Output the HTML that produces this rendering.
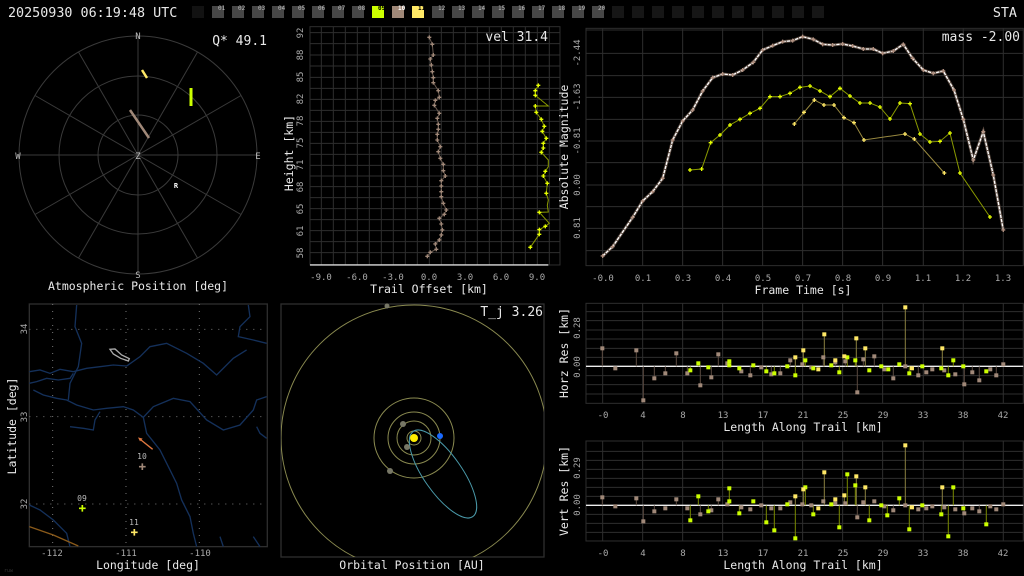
<!DOCTYPE html>
<html><head><meta charset="utf-8">
<style>
html,body{margin:0;padding:0;background:#000;}
svg{display:block;}
text{font-family:"DejaVu Sans Mono","Liberation Mono",monospace;}
</style></head>
<body>
<svg width="1024" height="576" viewBox="0 0 1024 576" xmlns="http://www.w3.org/2000/svg">
<defs>
<path id="p" d="M-6 0H6M0-6V6" />
<rect id="s" x="-6" y="-6" width="12" height="12"/>
</defs>
<rect width="1024" height="576" fill="#000"/>

<!-- header -->
<text x="8" y="17" fill="#e8e8e8" font-size="13.4">20250930 06:19:48 UTC</text>
<text x="1017" y="17" fill="#e8e8e8" font-size="13.4" text-anchor="end">STA</text>
<g>
<rect x="192" y="6" width="12" height="12" fill="#121212"/>
<rect x="212" y="6" width="12" height="12" fill="#474747"/>
<rect x="232" y="6" width="12" height="12" fill="#474747"/>
<rect x="252" y="6" width="12" height="12" fill="#474747"/>
<rect x="272" y="6" width="12" height="12" fill="#474747"/>
<rect x="292" y="6" width="12" height="12" fill="#474747"/>
<rect x="312" y="6" width="12" height="12" fill="#474747"/>
<rect x="332" y="6" width="12" height="12" fill="#474747"/>
<rect x="352" y="6" width="12" height="12" fill="#474747"/>
<rect x="372" y="6" width="12" height="12" fill="#ccff00"/>
<rect x="392" y="6" width="12" height="12" fill="#a08878"/>
<rect x="412" y="6" width="12" height="12" fill="#ffe866"/>
<rect x="432" y="6" width="12" height="12" fill="#474747"/>
<rect x="452" y="6" width="12" height="12" fill="#474747"/>
<rect x="472" y="6" width="12" height="12" fill="#474747"/>
<rect x="492" y="6" width="12" height="12" fill="#474747"/>
<rect x="512" y="6" width="12" height="12" fill="#474747"/>
<rect x="532" y="6" width="12" height="12" fill="#474747"/>
<rect x="552" y="6" width="12" height="12" fill="#474747"/>
<rect x="572" y="6" width="12" height="12" fill="#474747"/>
<rect x="592" y="6" width="12" height="12" fill="#474747"/>
<g fill="#161616">
<rect x="612" y="6" width="12" height="12"/><rect x="632" y="6" width="12" height="12"/><rect x="652" y="6" width="12" height="12"/><rect x="672" y="6" width="12" height="12"/><rect x="692" y="6" width="12" height="12"/><rect x="712" y="6" width="12" height="12"/><rect x="732" y="6" width="12" height="12"/><rect x="752" y="6" width="12" height="12"/><rect x="772" y="6" width="12" height="12"/><rect x="792" y="6" width="12" height="12"/><rect x="812" y="6" width="12" height="12"/>
</g>
<g font-size="6" fill="#bbb">
<text x="218" y="10">01</text><text x="238" y="10">02</text><text x="258" y="10">03</text><text x="278" y="10">04</text><text x="298" y="10">05</text><text x="318" y="10">06</text><text x="338" y="10">07</text><text x="358" y="10">08</text><text x="378" y="10" fill="#000" font-weight="bold">09</text><text x="398" y="10" fill="#fff" font-weight="bold">10</text><text x="418" y="10" fill="#000" font-weight="bold">11</text><text x="438" y="10">12</text><text x="458" y="10">13</text><text x="478" y="10">14</text><text x="498" y="10">15</text><text x="518" y="10">16</text><text x="538" y="10">17</text><text x="558" y="10">18</text><text x="578" y="10">19</text><text x="598" y="10">20</text>
</g>
</g>

<!-- polar plot -->
<g stroke="#3a3a3a" fill="none" stroke-width="1">
<circle cx="138" cy="155" r="119"/><circle cx="138" cy="155" r="79"/><circle cx="138" cy="155" r="40"/>
<line x1="138" y1="36" x2="138" y2="274"/><line x1="19" y1="155" x2="257" y2="155"/>
<line x1="78.5" y1="52" x2="197.5" y2="258"/><line x1="197.5" y1="52" x2="78.5" y2="258"/>
<line x1="35" y1="95.5" x2="241" y2="214.5"/><line x1="241" y1="95.5" x2="35" y2="214.5"/>
</g>
<g font-size="9" fill="#bbb" text-anchor="middle">
<text x="138" y="39">N</text><text x="138" y="278">S</text><text x="18" y="159">W</text><text x="258" y="159">E</text><text x="138" y="159">Z</text>
</g>
<text x="176" y="188" fill="#fff" font-size="7" font-weight="bold" text-anchor="middle">R</text>
<line x1="130" y1="110" x2="149" y2="138" stroke="#a08878" stroke-width="2.5"/>
<line x1="142" y1="70" x2="147" y2="78" stroke="#ffe866" stroke-width="2.5"/>
<line x1="191" y1="88" x2="191" y2="106" stroke="#ccff00" stroke-width="3"/>
<text x="267" y="45" fill="#e8e8e8" font-size="13" text-anchor="end">Q* 49.1</text>
<text x="138" y="290" fill="#e8e8e8" font-size="11.5" text-anchor="middle">Atmospheric Position [deg]</text>

<!-- trail offset -->
<g transform="translate(280,20) scale(0.3333)">
<g stroke="#2e2e2e" stroke-width="3" fill="none">
<path d="M124 20V735M160 20V735M196 20V735M232 20V735M268 20V735M304 20V735M340 20V735M376 20V735M412 20V735M448 20V735M484 20V735M520 20V735M556 20V735M592 20V735M628 20V735M664 20V735M700 20V735M736 20V735M772 20V735M808 20V735"/>
<path d="M90 38H840M90 71H840M90 105H840M90 138H840M90 172H840M90 205H840M90 238H840M90 271H840M90 304H840M90 337H840M90 370H840M90 403H840M90 436H840M90 468H840M90 500H840M90 533H840M90 566H840M90 599H840M90 632H840M90 665H840M90 698H840"/>
<rect x="90" y="20" width="750" height="715"/>
</g>
<line x1="90" y1="735" x2="805" y2="735" stroke="#ddd" stroke-width="4"/>
<polyline fill="none" stroke="#6a5a50" stroke-width="3" points="448,52 457,73 460,105 451,117 454,135 457,155 460,173 460,188 475,212 478,232 466,241 463,256 478,280 472,295 475,313 475,328 472,343 472,360 481,380 475,395 481,415 490,433 490,452 496,468 484,482 484,498 484,515 484,530 490,550 499,570 493,583 478,595 484,612 487,630 484,645 478,660 466,672 469,688 451,697 442,709"/>
<g stroke="#a08878" stroke-width="4">
<use href="#p" x="448" y="52"/><use href="#p" x="457" y="73"/><use href="#p" x="460" y="105"/><use href="#p" x="451" y="117"/><use href="#p" x="454" y="135"/><use href="#p" x="457" y="155"/><use href="#p" x="460" y="173"/><use href="#p" x="460" y="188"/><use href="#p" x="475" y="212"/><use href="#p" x="478" y="232"/><use href="#p" x="466" y="241"/><use href="#p" x="463" y="256"/><use href="#p" x="478" y="280"/><use href="#p" x="472" y="295"/><use href="#p" x="475" y="313"/><use href="#p" x="475" y="328"/><use href="#p" x="472" y="343"/><use href="#p" x="472" y="360"/><use href="#p" x="481" y="380"/><use href="#p" x="475" y="395"/><use href="#p" x="481" y="415"/><use href="#p" x="490" y="433"/><use href="#p" x="490" y="452"/><use href="#p" x="496" y="468"/><use href="#p" x="484" y="482"/><use href="#p" x="484" y="498"/><use href="#p" x="484" y="515"/><use href="#p" x="484" y="530"/><use href="#p" x="490" y="550"/><use href="#p" x="499" y="570"/><use href="#p" x="493" y="583"/><use href="#p" x="478" y="595"/><use href="#p" x="484" y="612"/><use href="#p" x="487" y="630"/><use href="#p" x="484" y="645"/><use href="#p" x="478" y="660"/><use href="#p" x="466" y="672"/><use href="#p" x="469" y="688"/><use href="#p" x="451" y="697"/><use href="#p" x="442" y="709"/>
</g>
<polyline fill="none" stroke="#8a9a00" stroke-width="3" points="775,196 766,212 766,226 805,258 766,258 769,277 784,298 793,319 787,334 799,355 790,370 790,384 784,397 805,420 805,440 796,454 790,468 802,490 799,520 805,540 802,556 805,576 778,577 808,610 796,619 778,629 778,643 751,682"/>
<g stroke="#e6ff00" stroke-width="4">
<use href="#p" x="775" y="196"/><use href="#p" x="766" y="212"/><use href="#p" x="766" y="226"/><use href="#p" x="766" y="258"/><use href="#p" x="769" y="277"/><use href="#p" x="784" y="298"/><use href="#p" x="793" y="319"/><use href="#p" x="787" y="334"/><use href="#p" x="799" y="355"/><use href="#p" x="790" y="370"/><use href="#p" x="790" y="384"/><use href="#p" x="784" y="397"/><use href="#p" x="796" y="454"/><use href="#p" x="790" y="468"/><use href="#p" x="802" y="490"/><use href="#p" x="799" y="520"/><use href="#p" x="778" y="577"/><use href="#p" x="796" y="619"/><use href="#p" x="778" y="629"/><use href="#p" x="778" y="643"/><use href="#p" x="751" y="682"/>
</g>
</g>
<g font-size="9" fill="#aaa">
<g text-anchor="middle">
<text transform="rotate(-90 303 33)" x="303" y="33">92</text>
<text transform="rotate(-90 303 55)" x="303" y="55">88</text>
<text transform="rotate(-90 303 77)" x="303" y="77">85</text>
<text transform="rotate(-90 303 99)" x="303" y="99">82</text>
<text transform="rotate(-90 303 121)" x="303" y="121">78</text>
<text transform="rotate(-90 303 143)" x="303" y="143">75</text>
<text transform="rotate(-90 303 165)" x="303" y="165">71</text>
<text transform="rotate(-90 303 187)" x="303" y="187">68</text>
<text transform="rotate(-90 303 209)" x="303" y="209">65</text>
<text transform="rotate(-90 303 231)" x="303" y="231">61</text>
<text transform="rotate(-90 303 253)" x="303" y="253">58</text>
<text x="321" y="280">-9.0</text><text x="357" y="280">-6.0</text><text x="393" y="280">-3.0</text><text x="429" y="280">0.0</text><text x="465" y="280">3.0</text><text x="501" y="280">6.0</text><text x="537" y="280">9.0</text>
</g>
</g>
<text transform="rotate(-90 293 153)" x="293" y="153" fill="#e8e8e8" font-size="11.5" text-anchor="middle">Height [km]</text>
<text x="429" y="293" fill="#e8e8e8" font-size="11.5" text-anchor="middle">Trail Offset [km]</text>
<text x="548" y="41" fill="#e8e8e8" font-size="13" text-anchor="end">vel 31.4</text>

<!-- light curve -->
<g transform="translate(550,25) scale(0.3333)">
<g stroke="#2e2e2e" stroke-width="3" fill="none">
<path d="M158 10V722M278 10V722M398 10V722M518 10V722M638 10V722M758 10V722M878 10V722M998 10V722M1120 10V722M1240 10V722M1360 10V722"/>
<path d="M108 15H1420M108 85H1420M108 152H1420M108 217H1420M108 283H1420M108 348H1420M108 413H1420M108 480H1420M108 545H1420M108 610H1420M108 677H1420"/>
<rect x="108" y="10" width="1312" height="712"/>
</g>
<polyline fill="none" stroke="#5a4a40" stroke-width="9" points="158,693 188,665 248,577 278,528 308,500 338,460 368,345 398,288 428,255 458,198 488,158 518,147 548,150 578,135 610,112 638,75 668,62 698,50 728,47 758,35 790,43 818,58 848,60 878,57 908,63 940,72 970,72 998,85 1030,78 1060,58 1088,100 1120,135 1150,145 1180,138 1212,195 1240,283 1270,405 1300,320 1330,450 1360,615"/>
<polyline fill="none" stroke="#fff" stroke-width="4" stroke-dasharray="10 3" points="158,693 188,665 248,577 278,528 308,500 338,460 368,345 398,288 428,255 458,198 488,158 518,147 548,150 578,135 610,112 638,75 668,62 698,50 728,47 758,35 790,43 818,58 848,60 878,57 908,63 940,72 970,72 998,85 1030,78 1060,58 1088,100 1120,135 1150,145 1180,138 1212,195 1240,283 1270,405 1300,320 1330,450 1360,615"/>
<g stroke="#b09080" stroke-width="4">
<use href="#p" x="158" y="693"/><use href="#p" x="188" y="665"/><use href="#p" x="248" y="577"/><use href="#p" x="278" y="528"/><use href="#p" x="308" y="500"/><use href="#p" x="338" y="460"/><use href="#p" x="368" y="345"/><use href="#p" x="398" y="288"/><use href="#p" x="428" y="255"/><use href="#p" x="458" y="198"/><use href="#p" x="488" y="158"/><use href="#p" x="518" y="147"/><use href="#p" x="548" y="150"/><use href="#p" x="578" y="135"/><use href="#p" x="610" y="112"/><use href="#p" x="638" y="75"/><use href="#p" x="668" y="62"/><use href="#p" x="698" y="50"/><use href="#p" x="728" y="47"/><use href="#p" x="758" y="35"/><use href="#p" x="790" y="43"/><use href="#p" x="818" y="58"/><use href="#p" x="848" y="60"/><use href="#p" x="878" y="57"/><use href="#p" x="908" y="63"/><use href="#p" x="940" y="72"/><use href="#p" x="970" y="72"/><use href="#p" x="998" y="85"/><use href="#p" x="1030" y="78"/><use href="#p" x="1060" y="58"/><use href="#p" x="1088" y="100"/><use href="#p" x="1120" y="135"/><use href="#p" x="1150" y="145"/><use href="#p" x="1180" y="138"/><use href="#p" x="1212" y="195"/><use href="#p" x="1240" y="283"/><use href="#p" x="1270" y="405"/><use href="#p" x="1300" y="320"/><use href="#p" x="1330" y="450"/><use href="#p" x="1360" y="615"/>
</g>
<polyline fill="none" stroke="#8a9a00" stroke-width="3" points="420,435 455,432 482,353 510,330 540,300 570,283 600,265 630,250 660,215 690,215 720,205 750,187 780,183 810,198 840,215 870,190 900,213 930,234 960,234 990,246 1020,282 1050,234 1080,236 1110,327 1140,351 1170,349 1200,324 1230,444 1320,576"/>
<g stroke="#e6ff00" stroke-width="4">
<use href="#p" x="420" y="435"/><use href="#p" x="455" y="432"/><use href="#p" x="482" y="353"/><use href="#p" x="510" y="330"/><use href="#p" x="540" y="300"/><use href="#p" x="570" y="283"/><use href="#p" x="600" y="265"/><use href="#p" x="630" y="250"/><use href="#p" x="660" y="215"/><use href="#p" x="690" y="215"/><use href="#p" x="720" y="205"/><use href="#p" x="750" y="187"/><use href="#p" x="780" y="183"/><use href="#p" x="810" y="198"/><use href="#p" x="840" y="215"/><use href="#p" x="870" y="190"/><use href="#p" x="900" y="213"/><use href="#p" x="930" y="234"/><use href="#p" x="960" y="234"/><use href="#p" x="990" y="246"/><use href="#p" x="1020" y="282"/><use href="#p" x="1050" y="234"/><use href="#p" x="1080" y="236"/><use href="#p" x="1110" y="327"/><use href="#p" x="1140" y="351"/><use href="#p" x="1170" y="349"/><use href="#p" x="1200" y="324"/><use href="#p" x="1230" y="444"/><use href="#p" x="1320" y="576"/>
</g>
<polyline fill="none" stroke="#9a8a40" stroke-width="3" points="733,297 762,262 793,225 822,240 852,240 882,278 912,293 942,345 1065,327 1093,342 1183,444"/>
<g stroke="#ffe866" stroke-width="4">
<use href="#p" x="733" y="297"/><use href="#p" x="762" y="262"/><use href="#p" x="793" y="225"/><use href="#p" x="822" y="240"/><use href="#p" x="852" y="240"/><use href="#p" x="882" y="278"/><use href="#p" x="912" y="293"/><use href="#p" x="942" y="345"/><use href="#p" x="1065" y="327"/><use href="#p" x="1093" y="342"/><use href="#p" x="1183" y="444"/>
</g>
</g>
<g font-size="9" fill="#aaa" text-anchor="middle">
<text transform="rotate(-90 580 53)" x="580" y="53">-2.44</text>
<text transform="rotate(-90 580 97)" x="580" y="97">-1.63</text>
<text transform="rotate(-90 580 141)" x="580" y="141">-0.81</text>
<text transform="rotate(-90 580 185)" x="580" y="185">0.00</text>
<text transform="rotate(-90 580 228)" x="580" y="228">0.81</text>
<text x="603" y="281">-0.0</text><text x="643" y="281">0.1</text><text x="683" y="281">0.3</text><text x="723" y="281">0.4</text><text x="763" y="281">0.5</text><text x="803" y="281">0.7</text><text x="843" y="281">0.8</text><text x="883" y="281">0.9</text><text x="923" y="281">1.1</text><text x="963" y="281">1.2</text><text x="1003" y="281">1.3</text>
</g>
<text transform="rotate(-90 568 147)" x="568" y="147" fill="#e8e8e8" font-size="11.5" text-anchor="middle">Absolute Magnitude</text>
<text x="803" y="294" fill="#e8e8e8" font-size="11.5" text-anchor="middle">Frame Time [s]</text>
<text x="1020" y="41" fill="#e8e8e8" font-size="13" text-anchor="end">mass -2.00</text>

<!-- map -->
<g transform="translate(0,300) scale(0.3333)">
<rect x="88" y="12" width="714" height="728" fill="none" stroke="#2e2e2e" stroke-width="4"/>
<g stroke="#777" stroke-width="3" stroke-dasharray="3 18" fill="none">
<path d="M158 12V740M378 12V740M598 12V740M88 88H802M88 350H802M88 612H802"/>
</g>
<g stroke="#14305a" stroke-width="4" fill="none">
<path d="M230 15 L225 80 L245 130 L235 200 L210 250 L205 300"/>
<path d="M88 215 L120 210 L150 220 L180 208 L220 215 L260 205 L300 200 L340 195 L380 198 L420 170 L450 140 L500 130 L560 160 L610 190 L650 225 L700 175 L740 150"/>
<path d="M88 250 L110 245 L140 235 L175 240 L210 235 L220 220"/>
<path d="M100 270 L130 285 L170 295 L200 300 L230 315 L280 330 L320 325 L370 320 L400 330 L430 352 L460 320 L520 295 L570 305 L620 360 L670 390 L720 375 L760 330 L770 300 L800 290"/>
<path d="M300 335 L285 360 L280 390 L250 385 L210 380"/>
<path d="M430 352 L440 400 L480 450 L510 510 L530 550 L545 600 L570 650 L580 700 L590 740"/>
<path d="M88 615 L120 630 L160 660 L200 700 L210 740"/>
<path d="M745 15 L750 50 L720 80 L715 110 L760 120 L800 130"/>
<path d="M770 380 L780 400 L800 415"/>
<path d="M660 710 L670 740M760 710 L780 740"/>
</g>
<path d="M88 680 L160 705 L235 738" stroke="#8a5a1a" stroke-width="4" fill="none"/>
<path d="M330 148 L345 147 L365 165 L388 176 L385 183 L362 175 L340 162 Z" fill="none" stroke="#aaa" stroke-width="4"/>
<line x1="458" y1="448" x2="418" y2="416" stroke="#e07840" stroke-width="4"/>
<path d="M414 412 L428 416 L420 424 Z" fill="#e07840"/>
<path d="M417 500H437M427 490V510" stroke="#a08878" stroke-width="5"/>
<path d="M237 625H257M247 615V635" stroke="#ccff00" stroke-width="5"/>
<path d="M393 697H413M403 687V707" stroke="#ffe866" stroke-width="5"/>
</g>
<g font-size="8" fill="#bbb" text-anchor="middle">
<text x="142" y="459">10</text><text x="82" y="501">09</text><text x="134" y="525">11</text>
</g>
<g font-size="9" fill="#aaa" text-anchor="middle">
<text transform="rotate(-90 27 329)" x="27" y="329">34</text>
<text transform="rotate(-90 27 417)" x="27" y="417">33</text>
<text transform="rotate(-90 27 504)" x="27" y="504">32</text>
<text x="52" y="556">-112</text><text x="126" y="556">-111</text><text x="200" y="556">-110</text>
</g>
<text transform="rotate(-90 16 426)" x="16" y="426" fill="#e8e8e8" font-size="11.5" text-anchor="middle">Latitude [deg]</text>
<text x="148" y="569" fill="#e8e8e8" font-size="11.5" text-anchor="middle">Longitude [deg]</text>
<text x="4" y="572" fill="#333" font-size="5">ruw</text>

<!-- orbital -->
<rect x="281" y="304" width="263" height="253" fill="none" stroke="#2e2e2e" stroke-width="1.3"/>
<clipPath id="oc"><rect x="281" y="304" width="263" height="253"/></clipPath>
<g clip-path="url(#oc)" fill="none" stroke="#8a8a50" stroke-width="1">
<circle cx="414" cy="438" r="133"/>
<circle cx="414" cy="438" r="7"/><circle cx="414" cy="438" r="17"/><circle cx="414" cy="438" r="26"/><circle cx="414" cy="438" r="40"/>
<ellipse cx="443" cy="474" rx="52" ry="19" transform="rotate(55 443 474)" stroke="#4a9aaa"/>
</g>
<circle cx="387" cy="306" r="2.5" fill="#777766"/>
<circle cx="403" cy="424" r="3" fill="#777766"/>
<circle cx="407" cy="447" r="3" fill="#777766"/>
<circle cx="390" cy="471" r="3" fill="#777766"/>
<circle cx="440" cy="436" r="3" fill="#1a6aff"/>
<circle cx="414" cy="438" r="4" fill="#ffee00"/>
<text x="543" y="316" fill="#e8e8e8" font-size="13" text-anchor="end">T_j 3.26</text>
<text x="412" y="569" fill="#e8e8e8" font-size="11.5" text-anchor="middle">Orbital Position [AU]</text>

<!-- horz residuals -->
<g transform="translate(550,300) scale(0.3333)">
<g stroke="#2e2e2e" stroke-width="3" fill="none">
<path d="M158 10V310M278 10V310M398 10V310M518 10V310M638 10V310M758 10V310M878 10V310M998 10V310M1120 10V310M1240 10V310M1360 10V310"/>
<path d="M108 35H1420M108 62H1420M108 90H1420M108 117H1420M108 145H1420M108 172H1420M108 227H1420M108 254H1420M108 282H1420"/>
<rect x="108" y="10" width="1312" height="300"/>
</g>
<line x1="108" y1="199" x2="1420" y2="199" stroke="#eee" stroke-width="4"/>
<path stroke="#5a4a40" stroke-width="3" d="M157 199V145M259 199V151M280 199V301M313 199V235M346 199V220M379 199V160M412 199V220M451 199V256M484 199V232M505 199V163M601 199V226M664 199V223M691 199V220M721 199V181M820 199V172M856 199V187M886 199V184M922 199V277M940 199V178M973 199V169M1030 199V235M1105 199V226M1243 199V253M1267 199V217M1288 199V241M1339 199V226"/>
<path stroke="#7a8a00" stroke-width="3" d="M421 199V211M445 199V190M538 199V184M649 199V214M673 199V220M736 199V226M766 199V181M868 199V217M892 199V172M916 199V181M1048 199V193M1078 199V220M1195 199V226M1210 199V181"/>
<path stroke="#8a8040" stroke-width="3" d="M736 199V172M760 199V151M823 199V103M919 199V115M946 199V145M1066 199V22M1177 199V145"/>
<g fill="#a08878">
<use href="#s" x="157" y="145"/><use href="#s" x="196" y="205"/><use href="#s" x="259" y="151"/><use href="#s" x="280" y="301"/><use href="#s" x="313" y="235"/><use href="#s" x="346" y="220"/><use href="#s" x="379" y="160"/><use href="#s" x="412" y="220"/><use href="#s" x="451" y="256"/><use href="#s" x="484" y="232"/><use href="#s" x="505" y="163"/><use href="#s" x="532" y="190"/><use href="#s" x="574" y="214"/><use href="#s" x="601" y="226"/><use href="#s" x="634" y="202"/><use href="#s" x="664" y="223"/><use href="#s" x="691" y="220"/><use href="#s" x="721" y="181"/><use href="#s" x="757" y="193"/><use href="#s" x="784" y="202"/><use href="#s" x="820" y="172"/><use href="#s" x="856" y="187"/><use href="#s" x="886" y="184"/><use href="#s" x="922" y="277"/><use href="#s" x="940" y="178"/><use href="#s" x="973" y="169"/><use href="#s" x="1003" y="208"/><use href="#s" x="1030" y="235"/><use href="#s" x="1066" y="199"/><use href="#s" x="1105" y="226"/><use href="#s" x="1129" y="217"/><use href="#s" x="1147" y="208"/><use href="#s" x="1183" y="211"/><use href="#s" x="1216" y="223"/><use href="#s" x="1243" y="253"/><use href="#s" x="1267" y="217"/><use href="#s" x="1288" y="241"/><use href="#s" x="1321" y="208"/><use href="#s" x="1339" y="226"/><use href="#s" x="1360" y="193"/>
</g>
<g fill="#ccff00">
<use href="#s" x="421" y="211"/><use href="#s" x="445" y="190"/><use href="#s" x="475" y="202"/><use href="#s" x="538" y="184"/><use href="#s" x="538" y="196"/><use href="#s" x="568" y="205"/><use href="#s" x="610" y="196"/><use href="#s" x="649" y="214"/><use href="#s" x="673" y="220"/><use href="#s" x="712" y="199"/><use href="#s" x="736" y="226"/><use href="#s" x="766" y="181"/><use href="#s" x="790" y="205"/><use href="#s" x="844" y="196"/><use href="#s" x="868" y="217"/><use href="#s" x="892" y="172"/><use href="#s" x="916" y="181"/><use href="#s" x="958" y="211"/><use href="#s" x="994" y="199"/><use href="#s" x="1015" y="208"/><use href="#s" x="1048" y="193"/><use href="#s" x="1078" y="220"/><use href="#s" x="1117" y="199"/><use href="#s" x="1174" y="205"/><use href="#s" x="1195" y="226"/><use href="#s" x="1210" y="181"/><use href="#s" x="1240" y="199"/><use href="#s" x="1309" y="214"/>
</g>
<g fill="#ffe866">
<use href="#s" x="736" y="172"/><use href="#s" x="760" y="151"/><use href="#s" x="805" y="208"/><use href="#s" x="823" y="103"/><use href="#s" x="856" y="181"/><use href="#s" x="883" y="169"/><use href="#s" x="919" y="115"/><use href="#s" x="946" y="145"/><use href="#s" x="1066" y="22"/><use href="#s" x="1086" y="205"/><use href="#s" x="1177" y="145"/>
</g>
</g>

<!-- vert residuals -->
<g transform="translate(550,436) scale(0.3333)">
<g stroke="#2e2e2e" stroke-width="3" fill="none">
<path d="M158 15V315M278 15V315M398 15V315M518 15V315M638 15V315M758 15V315M878 15V315M998 15V315M1120 15V315M1240 15V315M1360 15V315"/>
<path d="M108 46H1420M108 73H1420M108 100H1420M108 127H1420M108 154H1420M108 181H1420M108 235H1420M108 262H1420M108 289H1420"/>
<rect x="108" y="15" width="1312" height="300"/>
</g>
<line x1="108" y1="208" x2="1420" y2="208" stroke="#eee" stroke-width="4"/>
<path stroke="#5a4a40" stroke-width="3" d="M157 208V184M259 208V187M280 208V256M313 208V226M379 208V190M451 208V235M484 208V223M505 208V190M922 208V244M1030 208V223M1243 208V232M1288 208V226"/>
<path stroke="#7a8a00" stroke-width="3" d="M421 208V253M445 208V181M475 208V226M538 208V157M568 208V232M649 208V259M673 208V283M736 208V307M766 208V154M790 208V235M868 208V274M892 208V115M916 208V148M958 208V253M1012 208V238M1048 208V187M1078 208V280M1174 208V235M1195 208V301M1210 208V154M1309 208V265"/>
<path stroke="#8a8040" stroke-width="3" d="M736 208V181M760 208V160M823 208V109M856 208V190M883 208V178M919 208V121M946 208V154M1066 208V28M1177 208V154"/>
<g fill="#a08878">
<use href="#s" x="157" y="184"/><use href="#s" x="196" y="211"/><use href="#s" x="259" y="187"/><use href="#s" x="280" y="256"/><use href="#s" x="313" y="226"/><use href="#s" x="346" y="217"/><use href="#s" x="379" y="190"/><use href="#s" x="412" y="217"/><use href="#s" x="451" y="235"/><use href="#s" x="484" y="223"/><use href="#s" x="505" y="190"/><use href="#s" x="532" y="205"/><use href="#s" x="574" y="214"/><use href="#s" x="601" y="220"/><use href="#s" x="634" y="208"/><use href="#s" x="664" y="217"/><use href="#s" x="691" y="217"/><use href="#s" x="721" y="199"/><use href="#s" x="757" y="205"/><use href="#s" x="784" y="208"/><use href="#s" x="820" y="196"/><use href="#s" x="856" y="202"/><use href="#s" x="886" y="202"/><use href="#s" x="922" y="244"/><use href="#s" x="940" y="199"/><use href="#s" x="973" y="196"/><use href="#s" x="1003" y="211"/><use href="#s" x="1030" y="223"/><use href="#s" x="1066" y="208"/><use href="#s" x="1105" y="220"/><use href="#s" x="1129" y="217"/><use href="#s" x="1147" y="211"/><use href="#s" x="1183" y="214"/><use href="#s" x="1216" y="220"/><use href="#s" x="1243" y="232"/><use href="#s" x="1267" y="217"/><use href="#s" x="1288" y="226"/><use href="#s" x="1321" y="211"/><use href="#s" x="1339" y="220"/><use href="#s" x="1360" y="205"/>
</g>
<g fill="#ccff00">
<use href="#s" x="421" y="253"/><use href="#s" x="445" y="181"/><use href="#s" x="475" y="226"/><use href="#s" x="538" y="157"/><use href="#s" x="538" y="196"/><use href="#s" x="568" y="232"/><use href="#s" x="610" y="196"/><use href="#s" x="649" y="259"/><use href="#s" x="673" y="283"/><use href="#s" x="712" y="205"/><use href="#s" x="736" y="307"/><use href="#s" x="766" y="154"/><use href="#s" x="790" y="235"/><use href="#s" x="844" y="205"/><use href="#s" x="868" y="274"/><use href="#s" x="892" y="115"/><use href="#s" x="916" y="148"/><use href="#s" x="958" y="253"/><use href="#s" x="994" y="208"/><use href="#s" x="1012" y="238"/><use href="#s" x="1048" y="187"/><use href="#s" x="1078" y="280"/><use href="#s" x="1117" y="208"/><use href="#s" x="1174" y="235"/><use href="#s" x="1195" y="301"/><use href="#s" x="1210" y="154"/><use href="#s" x="1240" y="217"/><use href="#s" x="1309" y="265"/>
</g>
<g fill="#ffe866">
<use href="#s" x="736" y="181"/><use href="#s" x="760" y="160"/><use href="#s" x="805" y="217"/><use href="#s" x="823" y="109"/><use href="#s" x="856" y="190"/><use href="#s" x="883" y="178"/><use href="#s" x="919" y="121"/><use href="#s" x="946" y="154"/><use href="#s" x="1066" y="28"/><use href="#s" x="1086" y="214"/><use href="#s" x="1177" y="154"/>
</g>
</g>

<g font-size="9" fill="#aaa" text-anchor="middle">
<text transform="rotate(-90 580 328)" x="580" y="328">0.28</text>
<text transform="rotate(-90 580 367)" x="580" y="367">0.00</text>
<text transform="rotate(-90 580 468)" x="580" y="468">0.29</text>
<text transform="rotate(-90 580 505)" x="580" y="505">0.00</text>
<text x="603" y="418">-0</text><text x="643" y="418">4</text><text x="683" y="418">8</text><text x="723" y="418">13</text><text x="763" y="418">17</text><text x="803" y="418">21</text><text x="843" y="418">25</text><text x="883" y="418">29</text><text x="923" y="418">33</text><text x="963" y="418">38</text><text x="1003" y="418">42</text>
<text x="603" y="556">-0</text><text x="643" y="556">4</text><text x="683" y="556">8</text><text x="723" y="556">13</text><text x="763" y="556">17</text><text x="803" y="556">21</text><text x="843" y="556">25</text><text x="883" y="556">29</text><text x="923" y="556">33</text><text x="963" y="556">38</text><text x="1003" y="556">42</text>
</g>
<g font-size="11.5" fill="#e8e8e8" text-anchor="middle">
<text transform="rotate(-90 568 353)" x="568" y="353">Horz Res [km]</text>
<text x="803" y="431">Length Along Trail [km]</text>
<text transform="rotate(-90 568 491)" x="568" y="491">Vert Res [km]</text>
<text x="803" y="569">Length Along Trail [km]</text>
</g>
</svg>
</body></html>
